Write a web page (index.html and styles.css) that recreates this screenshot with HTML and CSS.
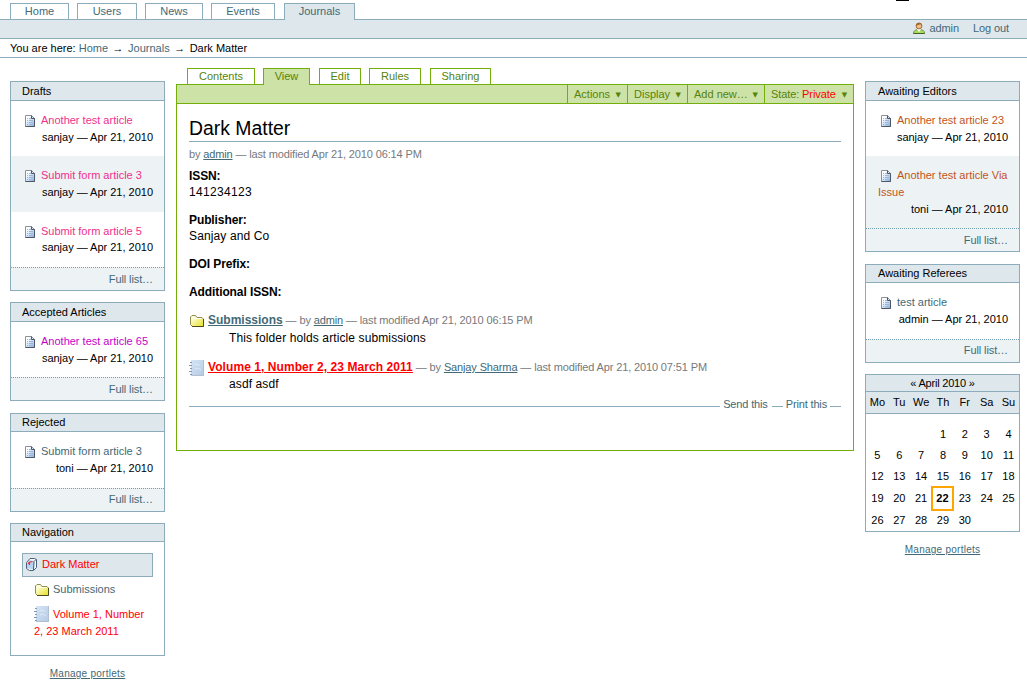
FILE: index.html
```html
<!DOCTYPE html>
<html lang="en">
<head>
<meta charset="utf-8">
<title>Dark Matter</title>
<link rel="stylesheet" href="styles.css">
</head>
<body>
<svg class="sprite" width="0" height="0" aria-hidden="true">
  <defs>
    <linearGradient id="gpage" x1="0" y1="0" x2="1" y2="1"><stop offset="0.25" stop-color="#fff"/><stop offset="1" stop-color="#7fb0e8"/></linearGradient>
    <linearGradient id="gfold" x1="0" y1="0" x2="1" y2="1"><stop offset="0.1" stop-color="#ffffe8"/><stop offset="1" stop-color="#e8e020"/></linearGradient>
    <linearGradient id="gnote" x1="0" y1="0" x2="1" y2="1"><stop offset="0" stop-color="#d6e5f5"/><stop offset="1" stop-color="#b3cae4"/></linearGradient>
  </defs>
  <symbol id="page" viewBox="0 0 10 12">
    <path d="M.5.5h6l3 3v8h-9z" fill="url(#gpage)" stroke="#8b909c"/>
    <path d="M6.500.5v3h3M9.500 3.500v8H.5" fill="none" stroke="#4f5663"/>
    <path d="M2 3.500h1m1 0h2M2 5.500h1m1 0h4M2 7.500h1m1 0h4M2 9.500h1m1 0h4" stroke="#9fb5d6"/>
  </symbol>
  <symbol id="folder" viewBox="0 0 14 12">
    <path d="M.5 9.500V2L2 .5h3.500L7 2.500h5L13.500 4v7.500h-11z" fill="url(#gfold)" stroke="#8f8d55"/>
    <path d="M2.500 4.500l1-1h8" fill="none" stroke="#fffff0"/>
    <path d="M2 11.500h11.500V4" fill="none" stroke="#4a4920"/>
  </symbol>
  <symbol id="notebook" viewBox="0 0 15 16">
    <path d="M2 0h13v16H2z" fill="url(#gnote)"/>
    <path d="M2.500 15.500h12V0" fill="none" stroke="#b0bfd2"/>
    <path d="M1 2.500h2M0 5.500h3M1 8.500h2M0 11.500h3M1 14.500h2" stroke="#7d98ba"/>
    <path d="M6 4.500h3l2 1M6 9l3-1 3 2" fill="none" stroke="#dfeaf7"/>
  </symbol>
  <symbol id="journal" viewBox="0 0 11 13">
    <path d="M4 .5h4.500l2 1v8l-3 3h-4l-3-2v-6z" fill="#f4f8fd" stroke="#4c6178"/>
    <path d="M1 4.500l2.500-2.500 4.500 1-1 8.500L1 10z" fill="#b7d3f4"/>
    <path d="M7.500 12l.5-8.500 2-2" fill="none" stroke="#3d5773"/>
    <path d="M2 5.500L4 4l2.500-.5M3.500 5v2" fill="none" stroke="#e83030" stroke-width="1.200"/>
  </symbol>
  <symbol id="user" viewBox="0 0 12 12">
    <path d="M.5 11.500C.5 8.500 2.500 7.500 6 7.500s5.500 1 5.500 4z" fill="#a5dc5c" stroke="#7c8a55"/>
    <path d="M.3 11.500h11.400" stroke="#466425"/>
    <path d="M3.800 7h4.400L6 10z" fill="#fff"/>
    <circle cx="6" cy="4" r="2.900" fill="#f0c08a" stroke="#a56a30"/>
    <path d="M2.800 3.800C2.500-.4 9.500-.4 9.200 3.800L7.500 2.300z" fill="#a2662a"/>
  </symbol>
</svg>

<header class="top">
  <nav class="sections">
    <a class="s1">Home</a><a class="s2">Users</a><a class="s3">News</a><a class="s4">Events</a><a class="s5 on">Journals</a>
  </nav>
  <div class="personal"><svg class="i-user"><use href="#user"/></svg><a class="admin">admin</a><a>Log out</a></div>
  <div class="crumbs"><span>You are here:</span> <a>Home</a><i>→</i><a>Journals</a><i>→</i>Dark Matter</div>
</header>

<div class="columns">
  <aside class="side left">
    <section class="portlet drafts">
      <h2>Drafts</h2>
      <div class="item"><svg class="i-page"><use href="#page"/></svg><a class="pink">Another test article</a><span>sanjay — Apr 21, 2010</span></div>
      <div class="item even"><svg class="i-page"><use href="#page"/></svg><a class="pink">Submit form article 3</a><span>sanjay — Apr 21, 2010</span></div>
      <div class="item third"><svg class="i-page"><use href="#page"/></svg><a class="pink">Submit form article 5</a><span>sanjay — Apr 21, 2010</span></div>
      <div class="foot"><a>Full list…</a></div>
    </section>
    <section class="portlet accepted">
      <h2>Accepted Articles</h2>
      <div class="item"><svg class="i-page"><use href="#page"/></svg><a class="magenta">Another test article 65</a><span>sanjay — Apr 21, 2010</span></div>
      <div class="foot"><a>Full list…</a></div>
    </section>
    <section class="portlet rejected">
      <h2 class="short">Rejected</h2>
      <div class="item tall"><svg class="i-page"><use href="#page"/></svg><a>Submit form article 3</a><span>toni — Apr 21, 2010</span></div>
      <div class="foot high"><a>Full list…</a></div>
    </section>
    <section class="portlet">
      <h2 class="short">Navigation</h2>
      <div class="tree">
        <div class="current"><svg class="i-journal"><use href="#journal"/></svg><a class="red">Dark Matter</a></div>
        <div class="node"><svg class="i-folder"><use href="#folder"/></svg><a>Submissions</a></div>
        <div class="node vol"><svg class="i-note"><use href="#notebook"/></svg><a class="red">Volume 1, Number 2, 23 March 2011</a></div>
      </div>
    </section>
    <div class="manage"><a>Manage portlets</a></div>
  </aside>

  <main>
    <nav class="views">
      <a class="v1">Contents</a><a class="v2 on">View</a><a class="v3">Edit</a><a class="v4">Rules</a><a class="v5">Sharing</a>
    </nav>
    <div class="frame">
      <div class="actions">
        <a class="m1">Actions<b>▼</b></a><a class="m2">Display<b>▼</b></a><a class="m3">Add new…<b>▼</b></a><a class="m4"><span>State: <em>Private</em></span><b>▼</b></a>
      </div>
      <article>
        <h1>Dark Matter</h1>
        <p class="byline">by <a>admin</a> — last modified Apr 21, 2010 06:14 PM</p>
        <dl>
          <dt>ISSN:</dt><dd class="num">141234123</dd>
          <dt>Publisher:</dt><dd class="co">Sanjay and Co</dd>
          <dt>DOI Prefix:</dt>
          <dt>Additional ISSN:</dt>
        </dl>
        <div class="entry"><svg class="i-folder"><use href="#folder"/></svg><a class="name">Submissions</a><span class="meta"> — by <a>admin</a> — last modified Apr 21, 2010 06:15 PM</span></div>
        <p class="desc">This folder holds article submissions</p>
        <div class="entry second"><svg class="i-note"><use href="#notebook"/></svg><a class="name issue red">Volume 1, Number 2, 23 March 2011</a><span class="meta"> — by <a>Sanjay Sharma</a> — last modified Apr 21, 2010 07:51 PM</span></div>
        <p class="desc">asdf asdf</p>
        <div class="docactions"><i class="rule grow"></i><a class="send">Send this</a><i class="rule"></i><a>Print this</a><i class="rule"></i></div>
      </article>
    </div>
  </main>

  <aside class="side right">
    <section class="portlet editors">
      <h2>Awaiting Editors</h2>
      <div class="item"><svg class="i-page"><use href="#page"/></svg><a class="orange">Another test article 23</a><span>sanjay — Apr 21, 2010</span></div>
      <div class="item even last"><svg class="i-page"><use href="#page"/></svg><a class="orange">Another test article Via Issue</a><span>toni — Apr 21, 2010</span></div>
      <div class="foot"><a>Full list…</a></div>
    </section>
    <section class="portlet referees">
      <h2 class="short">Awaiting Referees</h2>
      <div class="item tall"><svg class="i-page"><use href="#page"/></svg><a>test article</a><span>admin — Apr 21, 2010</span></div>
      <div class="foot high"><a>Full list…</a></div>
    </section>
    <section class="calendar">
      <div class="month">« April 2010 »</div>
      <div class="week names"><span>Mo</span><span>Tu</span><span>We</span><span>Th</span><span>Fr</span><span>Sa</span><span>Su</span></div>
      <div class="week"><span></span><span></span><span></span><span>1</span><span>2</span><span>3</span><span>4</span></div>
      <div class="week"><span>5</span><span>6</span><span>7</span><span>8</span><span>9</span><span>10</span><span>11</span></div>
      <div class="week mid"><span>12</span><span>13</span><span>14</span><span>15</span><span>16</span><span>17</span><span>18</span></div>
      <div class="week now"><span>19</span><span>20</span><span>21</span><span class="today">22</span><span>23</span><span>24</span><span>25</span></div>
      <div class="week"><span>26</span><span>27</span><span>28</span><span>29</span><span>30</span><span></span><span></span></div>
    </section>
    <div class="manage"><a>Manage portlets</a></div>
  </aside>
</div>
</body>
</html>
```
FILE: styles.css
```css
* { box-sizing: border-box; }
body { margin: 0; height: 686px; overflow: hidden; background: #fff; color: #000; font: 11px/17px "Liberation Sans", Arial, sans-serif; }
a { color: #436976; }
h1, h2, p, dl, dt, dd { margin: 0; font-weight: normal; }
i, em { font-style: normal; }
svg { flex: none; }
.sprite { position: absolute; }
.i-page { width: 10px; height: 12px; }
.i-folder { width: 14px; height: 12px; }
.i-note { width: 15px; height: 16px; }
.i-journal { width: 11px; height: 13px; }
.i-user { width: 12px; height: 12px; margin: -2px 5px 0 0; }
.pink { color: #f0308c; }
.magenta { color: #c800c8; }
.orange { color: #c2551a; }
a.red { color: #f00; }

/* header */
.top { position: relative; height: 58px; padding-top: 3px; }
.top::after { content: ""; position: absolute; top: 0; left: 896px; width: 13px; height: 1px; background: #000; }
.sections { position: relative; z-index: 1; display: flex; height: 17px; padding-left: 10px; }
.sections a { height: 16px; border: 1px solid #8cacbb; border-bottom: 0; text-align: center; line-height: 15px; }
.sections .on { height: 17px; background: #dee7ec; }
.s1 { width: 59px; margin-right: 8px; }
.s2 { width: 60px; margin-right: 8px; }
.s3 { width: 58px; margin-right: 8px; }
.s4 { width: 64px; margin-right: 9px; }
.s5 { width: 71px; }
.personal { display: flex; justify-content: flex-end; align-items: center; height: 20px; margin-top: -1px; padding-right: 18px; background: #dee7ec; border: solid #8cacbb; border-width: 1px 0; line-height: 15px; }
.personal a { margin-top: -1px; letter-spacing: -.1px; }
.personal .admin { margin-right: 14px; }
.crumbs { height: 19px; padding-left: 10px; border-bottom: 1px solid #8cacbb; line-height: 19px; }
.crumbs i { display: inline-block; width: 20px; text-align: center; }

/* columns */
.columns { display: flex; }
.side { width: 155px; flex: none; padding-top: 23px; }
.left { margin-left: 10px; }
main { width: 678px; margin: 10px 11px 0; }
.portlet { margin-bottom: 11px; border: 1px solid #8cacbb; }
.accepted, .editors { margin-bottom: 12px; }
h2 { height: 19px; padding: 0 11px; background: #dee7ec; border-bottom: 1px solid #8cacbb; font-size: 11px; line-height: 18px; }
h2.short { height: 18px; line-height: 16px; }
.item { height: 55px; padding: 11px 11px 0; }
.item.even { height: 56px; background: #edf2f5; }
.item.tall { height: 56px; }
.item.even.last { height: 72px; }
.item svg { margin: 0 6px -3px 3px; }
.item span { display: block; text-align: right; letter-spacing: -.01px; }
.item.third span { margin-top: -1px; }
.right h2, .right .item { padding-left: 12px; padding-right: 11px; }
.foot { height: 23px; padding-right: 11px; border-top: 1px dotted #74a0b4; background: #edf2f5; text-align: right; line-height: 23px; }
.foot a { letter-spacing: -.1px; }
.foot.high { line-height: 21px; }
.tree { height: 113px; padding: 11px 11px 0; }
.current { display: flex; align-items: center; height: 24px; padding: 0 0 1px 3px; background: #dee7ec; border: 1px solid #8cacbb; }
.current svg { margin-right: 5px; }
.node { margin: 4px 0 0 12px; }
.node + .node { margin-top: 8px; }
.node svg { margin: 0 4px -3px 1px; }
.node.vol svg { margin: 0 4px -4px 0; }
.manage { margin-top: -2px; text-align: center; font-size: 10px; }
.manage a { text-decoration: underline; letter-spacing: .25px; }

/* main frame */
.views { position: relative; z-index: 1; display: flex; height: 17px; padding-left: 11px; }
.views a { height: 16px; border: 1px solid #74ae0b; border-bottom: 0; color: #578308; text-align: center; line-height: 15px; }
.views .on { height: 17px; background: #cde2a7; }
.v1 { width: 68px; margin-right: 8px; }
.v2 { width: 47px; margin-right: 9px; }
.v3 { width: 42px; margin-right: 8px; }
.v4 { width: 52px; margin-right: 9px; }
.v5 { width: 61px; }
.frame { height: 367px; margin-top: -1px; border: 1px solid #74ae0b; }
.actions { display: flex; justify-content: flex-end; height: 19px; background: #cde2a7; border-bottom: 1px solid #74ae0b; line-height: 19px; }
.actions a { display: flex; justify-content: space-between; padding: 0 6px; border-left: 1px solid #74ae0b; color: #578308; white-space: pre; }
.actions b { font: 7px/20px "DejaVu Sans", sans-serif; }
.actions em { color: #f00; }
.m1, .m2 { width: 60px; }
.m3 { width: 77px; }
.m4 { width: 89px; letter-spacing: -.1px; }
article { padding: 0 12px; }
h1 { height: 38px; border-bottom: 1px solid #8cacbb; font-size: 19.4px; line-height: 48px; }
.byline { margin-top: 4px; color: #76797c; letter-spacing: -.14px; }
.byline a, .meta a { text-decoration: underline; }
dl { margin-top: 5px; font-size: 12px; line-height: 16px; }
dt { font-weight: bold; letter-spacing: -.1px; }
dd + dt, dt + dt { margin-top: 12px; }
.num { letter-spacing: .33px; }
.co { letter-spacing: .13px; }
.entry { display: flex; align-items: center; height: 17px; margin-top: 12px; }
.entry.second { height: 18px; margin-bottom: -1px; padding-top: 1px; }
.entry .i-folder { margin: 1px 4px 0 1px; }
.entry .i-note { margin: 0 4px 0 0; }
.name { font-size: 12px; font-weight: bold; text-decoration: underline; }
.name.issue { letter-spacing: .07px; }
.meta { color: #76797c; white-space: pre; letter-spacing: -.13px; }
.desc { margin: 1px 0 0 40px; font-size: 12px; line-height: 16px; letter-spacing: .11px; }
.docactions { display: flex; height: 17px; margin-top: 5px; }
.docactions a { margin: 0 3px; line-height: 15px; letter-spacing: -.15px; }
.docactions .send { margin-right: 4px; }
.rule { width: 11px; height: 1px; margin-top: 9px; background: #8cacbb; }
.rule.grow { flex: 1; }

/* calendar */
.referees { margin-bottom: 11px; }
.calendar { height: 158px; margin-bottom: 11px; border: 1px solid #8cacbb; }
.month { height: 17px; background: #dee7ec; border-bottom: 1px solid #8cacbb; text-align: center; line-height: 17px; letter-spacing: -.2px; }
.week { display: grid; grid-template-columns: repeat(7, 21.85px); height: 21px; text-align: center; line-height: 20px; }
.week.mid, .week.now { height: 22px; }
.week span { padding-left: 1px; }
.names { height: 22px; margin-bottom: 10px; background: #dee7ec; border-bottom: 1px solid #8cacbb; line-height: 21px; }
.week .today { height: 25px; margin: -2px -1px 0; padding: 0; border: 2px solid #ffa500; font-weight: bold; line-height: 20px; }
```
